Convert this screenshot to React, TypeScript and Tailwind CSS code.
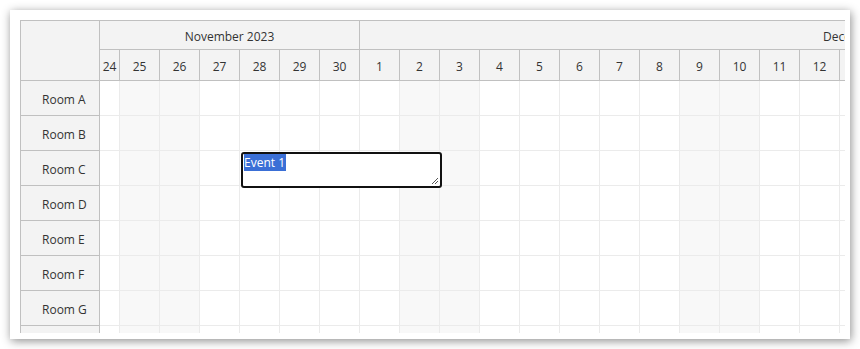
import React from 'react';

const DAYS = [
  { d: 24, w: 20, we: false },
  { d: 25, w: 40, we: true },
  { d: 26, w: 40, we: true },
  { d: 27, w: 40, we: false },
  { d: 28, w: 40, we: false },
  { d: 29, w: 40, we: false },
  { d: 30, w: 40, we: false },
  { d: 1, w: 40, we: false },
  { d: 2, w: 40, we: true },
  { d: 3, w: 40, we: true },
  { d: 4, w: 40, we: false },
  { d: 5, w: 40, we: false },
  { d: 6, w: 40, we: false },
  { d: 7, w: 40, we: false },
  { d: 8, w: 40, we: false },
  { d: 9, w: 40, we: true },
  { d: 10, w: 40, we: true },
  { d: 11, w: 40, we: false },
  { d: 12, w: 40, we: false },
  { d: 13, w: 40, we: false },
];

const ROOMS = ['Room A', 'Room B', 'Room C', 'Room D', 'Room E', 'Room F', 'Room G', 'Room H'];

export default function App() {
  return (
    <div className="w-[860px] h-[349px] bg-white pt-[10px] pl-[10px] text-[12px] text-[#333]" style={{ fontFamily: '"Open Sans", "Noto Sans", sans-serif' }}>
      <div className="w-[840px] h-[329px] bg-white pt-[10px] pl-[10px] shadow-[1px_2px_9px_rgba(0,0,0,0.45)]">
        <div className="relative w-[825px] h-[313px] overflow-hidden border-t border-l border-[#c0c0c0] flex">
          {/* row headers */}
          <div className="w-[79px] shrink-0 flex flex-col">
            <div className="h-[60px] shrink-0 bg-[#f3f3f3] border-r border-b border-[#c0c0c0]" />
            {ROOMS.map(r => (
              <div key={r} className="h-[35px] shrink-0 bg-[#f3f3f3] border-r border-b border-[#c0c0c0] flex items-center pl-[21px] pt-[3px]">
                {r}
              </div>
            ))}
          </div>

          {/* timeline */}
          <div className="flex flex-col shrink-0">
            <div className="flex h-[29px] shrink-0">
              <div className="w-[260px] shrink-0 bg-[#f3f3f3] border-r border-b border-[#c0c0c0] flex items-center justify-center pt-[4px]">
                November 2023
              </div>
              <div className="w-[800px] shrink-0 bg-[#f3f3f3] border-b border-[#c0c0c0] flex items-center pl-[463px] pt-[4px] whitespace-nowrap">
                December 2023
              </div>
            </div>
            <div className="flex h-[31px] shrink-0">
              {DAYS.map(x => (
                <div key={x.d} className="shrink-0 bg-[#f3f3f3] border-r border-b border-[#c0c0c0] flex items-center justify-center pt-[4px]" style={{ width: x.w }}>
                  {x.d}
                </div>
              ))}
            </div>
            {ROOMS.map(r => (
              <div key={r} className="flex h-[35px] shrink-0">
                {DAYS.map(x => (
                  <div key={x.d} className={`shrink-0 border-r border-b border-[#ebebeb] ${x.we ? 'bg-[#f8f8f8]' : 'bg-white'}`} style={{ width: x.w }} />
                ))}
              </div>
            ))}
          </div>

          {/* inline event editor */}
          <div className="absolute left-[220px] top-[131px] w-[201px] h-[36px] bg-white border-2 border-[#111] rounded-[3px] pl-[1px] pt-[1px] leading-[16px] text-[12px]">
            <span className="bg-[#3a6fd6] text-white pr-[1px]">Event 1</span>
            <svg className="absolute right-[1px] bottom-[1px]" width="9" height="9" viewBox="0 0 9 9">
              <path d="M8 2 L2 8 M8 5 L5 8" stroke="#555" strokeWidth="1" fill="none" />
            </svg>
          </div>
        </div>
      </div>
    </div>
  );
}
